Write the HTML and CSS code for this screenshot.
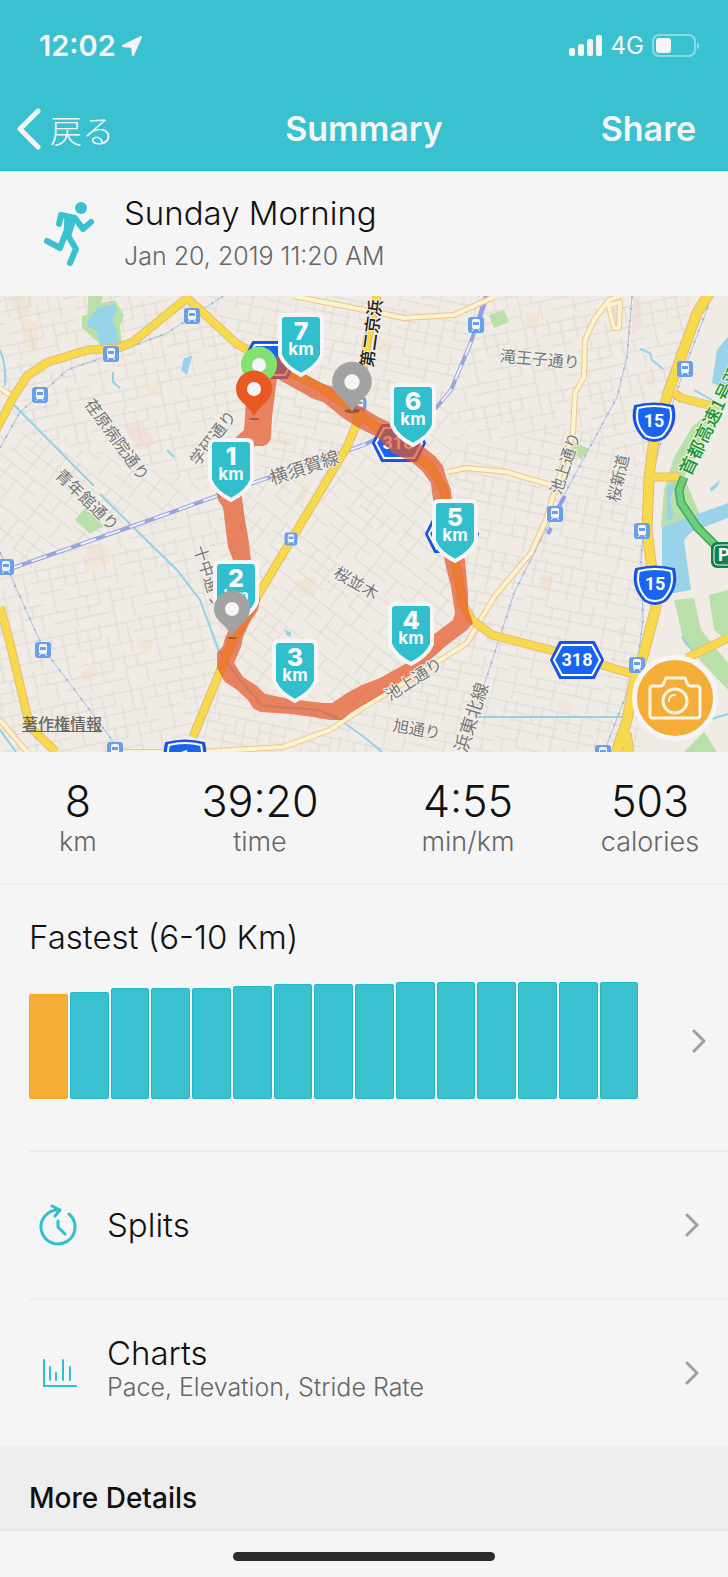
FILE: index.html
```html
<!DOCTYPE html>
<html lang="en">

<head>
   <meta charset="UTF-8">
   <meta name="viewport" content="width=device-width, initial-scale=1.0">
   <title>Summary</title>

   <link rel="stylesheet" href="styles.css">
</head>

<body>
   <header class="header">
      <div class="status">
         <div class="status__group">
            <span class="status__time">12:02</span>
            <svg class="status__arrow" viewBox="0 0 20 20">
               <path d="M19 1 L1 10 L10 11 L11 19 Z" fill="#f5f5f5" stroke="#f5f5f5" stroke-width="2" stroke-linejoin="round" />
            </svg>
         </div>
         <div class="status__group status__group--right">
            <svg class="status__signal" viewBox="0 0 34 22" fill="#f5f5f5">
               <rect x="0" y="13" width="6" height="8" rx="2" />
               <rect x="9" y="9" width="6" height="12" rx="2" />
               <rect x="18" y="4" width="6" height="17" rx="2" />
               <rect x="27" y="0" width="6" height="21" rx="2" />
            </svg>
            <span class="status__network">4G</span>
            <svg class="status__battery" viewBox="0 0 48 24">
               <rect x="1" y="1" width="42" height="21" rx="6" fill="none" stroke="#8cdbe3" stroke-width="2" />
               <rect x="4" y="4" width="15" height="15" rx="3" fill="#f5f5f5" />
               <path d="M45 8 Q50 11 45 16 Z" fill="#8cdbe3" />
            </svg>
         </div>
      </div>

      <nav class="nav">
         <button class="nav__button nav__back" type="button">
            <svg class="nav__icon" viewBox="0 0 25 42">
               <path d="M22 3 L4 21 L22 39" fill="none" stroke="#f5f5f5" stroke-width="5" stroke-linecap="round" stroke-linejoin="round" />
            </svg>
            <span lang="ja">戻る</span>
         </button>
         <h1 class="nav__title">Summary</h1>
         <button class="nav__button nav__share" type="button">Share</button>
      </nav>
   </header>

   <main>
      <section class="activity">
         <svg class="activity__icon" viewBox="0 0 52 66" fill="none" stroke="#3ac1cf" stroke-width="6" stroke-linecap="round" stroke-linejoin="round">
            <circle cx="37" cy="7" r="6" fill="#3ac1cf" stroke="none" />
            <path d="M15 23 L17 14 L31 17 L39 28 L47 21" />
            <path d="M3 40 L16 47 L27 18" />
            <path d="M23 33 L32 48 L26 62" />
            <path d="M22 15 L31 18 L26 34 L21 34 Z" fill="#3ac1cf" stroke-width="3" />
         </svg>
         <div>
            <h2 class="activity__name">Sunday Morning</h2>
            <p class="activity__date">Jan 20, 2019 11:20 AM</p>
         </div>
      </section>

      <section class="map">
         <svg class="map__canvas" viewBox="0 0 728 456" lang="ja">
            <defs>
               <pattern id="streets-a" width="92" height="68" patternUnits="userSpaceOnUse" patternTransform="rotate(-12)">
                  <path d="M0 5 H92 M0 16 H28 M8 25 H60 M5 0 V25 M16 5 V39 M28 0 V16 M34 16 V50 M46 0 V25 M56 5 V34 M70 0 V16 M82 5 V50 M60 16 H92 M70 28 H92 M0 39 H70 M0 50 H34 M46 50 H92 M8 50 V68 M22 39 V60 M46 34 V68 M58 39 V50 M66 50 V68 M0 60 H46 M76 60 H92" class="map__street" />
               </pattern>
               <pattern id="streets-b" width="100" height="80" patternUnits="userSpaceOnUse" patternTransform="rotate(38)">
                  <path d="M0 4 H100 M0 14 H30 M12 23 H60 M0 33 H36 M6 4 V33 M20 0 V23 M30 4 V44 M42 14 V33 M52 4 V44 M66 0 V30 M80 4 V44 M60 16 H100 M66 30 H92 M0 44 H100 M0 56 H52 M60 60 H100 M12 44 V80 M26 56 V80 M40 44 V68 M60 44 V80 M74 44 V60 M88 60 V80 M0 70 H26 M40 68 H80" class="map__street" />
               </pattern>
               <pattern id="streets-c" width="96" height="72" patternUnits="userSpaceOnUse" patternTransform="rotate(12)">
                  <path d="M0 3 H96 M0 12 H30 M10 20 H60 M0 29 H96 M4 3 V29 M14 0 V12 M22 12 V46 M32 3 V20 M41 0 V36 M56 3 V46 M68 0 V20 M82 3 V36 M56 12 H82 M68 20 H96 M0 40 H22 M22 46 H70 M0 56 H96 M8 40 V72 M30 46 V60 M48 46 V72 M70 36 V56 M84 44 V72 M70 44 H96 M8 64 H48" class="map__street" />
               </pattern>
               <g id="station">
                  <rect x="-8" y="-8" width="16" height="16" rx="3" fill="#689fe8" />
                  <path d="M-4 -4 Q-4 -6 -2 -6 H2 Q4 -6 4 -4 V2 Q4 4 2 4 H-2 Q-4 4 -4 2 Z" fill="#f5f5f5" />
                  <path d="M-3 -3 H3 V0 H-3 Z" fill="#689fe8" />
                  <path d="M-2 4 L-4 6 M2 4 L4 6" stroke="#f5f5f5" />
               </g>
               <g id="hexagon">
                  <path d="M-26 0 L-17 -18 H17 L26 0 L17 18 H-17 Z" fill="#1a64f0" stroke="#1a4fe0" stroke-width="2" stroke-linejoin="round" />
                  <path d="M-23 0 L-15 -15 H15 L23 0 L15 15 H-15 Z" fill="none" stroke="#fff" stroke-width="2" stroke-linejoin="round" />
               </g>
               <g id="shield">
                  <path d="M-19 -16 Q0 -21 19 -16 Q24 2 10 16 Q0 22 -10 16 Q-24 2 -19 -16 Z" fill="#1a64f0" stroke="#1a4fe0" stroke-width="2" />
                  <path d="M-16 -14 Q0 -18 16 -14 Q20 2 8 14 Q0 18 -8 14 Q-20 2 -16 -14 Z" fill="none" stroke="#fff" stroke-width="2" />
               </g>
               <path id="marker" d="M-16 2 H16 Q21 2 21 7 V42 Q16 54 0 62 Q-16 54 -21 42 V7 Q-21 2 -16 2 Z" fill="#31bfcd" stroke="#f5f5f5" stroke-width="4" />
               <path id="pin" d="M0 27 Q-4 20 -13 12 A18 18 0 1 1 13 12 Q4 20 0 27 Z M0 -7 A7 7 0 1 0 0 7 A7 7 0 1 0 0 -7 Z" />
            </defs>

            <!-- ground -->
            <rect width="728" height="456" fill="#f0ece5" />
            <g fill="#f0e5d6">
               <path d="M8 0 H33 L29 21 L13 16 Z M24 22 L40 28 L37 54 L22 49 Z M145 92 L160 83 L163 92 L149 100 Z" />
               <path d="M85 250 H108 L110 268 L88 275 Z M296 284 L317 281 L312 300 L299 302 Z M138 341 L154 346 L149 356 L136 350 Z" />
               <path d="M272 140 L295 143 L292 150 L272 148 Z M302 190 L313 184 L303 207 L296 203 Z M378 40 L393 46 L388 60 L378 55 Z" />
               <path d="M526 17 H540 L537 34 L526 31 Z M647 78 L657 82 L652 91 L644 88 Z M80 378 L95 367 L99 378 L84 386 Z" />
               <path d="M540 278 L552 280 L549 295 L540 291 Z M618 333 L626 330 L625 340 L617 341 Z M559 404 L573 408 L567 418 L558 413 Z" />
            </g>
            <path d="M125 132 L142 124 L156 147 L138 156 Z M633 0 H640 L643 30 L632 40 Z" fill="#f3e0dd" />

            <path d="M0 0 H190 L270 60 L210 190 L0 130 Z" fill="url(#streets-a)" />
            <path d="M0 130 L210 190 L160 222 L0 275 Z" fill="url(#streets-b)" />
            <path d="M190 0 H480 L450 100 L250 190 L270 60 Z" fill="url(#streets-c)" />
            <path d="M0 275 L160 222 L245 190 L240 320 L190 456 H0 Z" fill="url(#streets-a)" />
            <path d="M245 190 L450 100 L460 320 L330 430 L220 370 Z" fill="url(#streets-b)" />
            <path d="M480 0 H700 L650 180 L580 130 L470 150 L450 100 Z" fill="url(#streets-a)" />
            <path d="M450 110 L470 150 L580 130 L650 180 L640 456 H190 L220 370 L330 430 L465 330 Z" fill="url(#streets-c)" />

            <!-- parks -->
            <g fill="#badfaa">
               <path d="M88 0 H103 L101 7 L115 4 L124 19 L120 30 L122 48 L100 48 L82 32 V20 L88 18 Z" />
               <path d="M75 224 L85 212 L104 230 L90 238 Z M489 19 L504 14 L509 26 L494 32 Z M574 146 L589 153 L581 164 L572 155 Z" />
               <path d="M728 105 L711 114 L692 131 L674 161 L664 194 L661 231 L678 227 L700 219 L684 181 Z" />
               <path d="M674 304 L694 302 L701 334 L728 367 V394 L684 347 Z M709 299 L728 294 V345 L714 334 Z M684 456 L704 436 L717 456 Z" />
            </g>

            <!-- water -->
            <g fill="#98d3ea">
               <path d="M88 24 L97 12 L115 8 L117 14 L112 24 L117 36 L119 48 L100 49 L97 34 L87 30 Z M184 62 L192 60 L187 79 L181 74 Z" />
               <path d="M728 41 L717 54 L712 87 L728 94 Z M662 231 L728 207 V222 L691 236 L684 244 L691 294 L662 299 Z" />
               <path d="M667 190 L675 186 L670 206 L674 220 L667 226 Z M710 192 L720 184 L718 190 L711 196 Z M285 334 L291 336 V341 L286 339 Z" />
            </g>
            <g fill="none" stroke="#92d2e6" stroke-width="2">
               <path d="M12 107 L94 190 M100 198 L133 231 L177 274 L200 304 L219 355 L240 384 L263 410 L320 414 L340 424 L364 441 L382 456" />
               <path d="M0 54 Q6 66 5 90 M113 76 V86 L120 92 M167 154 L174 161 M640 53 L650 57 L652 64 L663 73 M694 94 L712 104" />
               <path d="M477 421 H631 M708 424 L728 418" />
               <path d="M0 434 L16 456 M682 341 L692 354" />
            </g>

            <!-- railways -->
            <g fill="none" stroke="#adc2de" stroke-width="1">
               <path d="M0 152 L20 116 L40 99 L67 74 L110 59 L167 37 L192 21 L223 0 M0 256 L43 352 L107 437 L120 456" />
               <path d="M632 0 L627 61 L617 101 L556 214 L514 297 L477 411" />
               <path d="M712 0 L684 74 L666 127 L646 201 L641 264 L643 324 L637 371 L604 456" />
            </g>
            <g fill="none" stroke="#9db7de" stroke-width="2" stroke-dasharray="2 10">
               <path d="M0 152 L20 116 L40 99 L67 74 L110 59 L167 37 L192 21 L223 0 M0 256 L43 352 L107 437 L120 456" />
               <path d="M632 0 L627 61 L617 101 L556 214 L514 297 L477 411" />
               <path d="M712 0 L684 74 L666 127 L646 201 L641 264 L643 324 L637 371 L604 456" />
            </g>
            <path d="M7 274 L150 224 L253 187 L364 149 L436 112 L451 94 L471 46 L486 0" class="map__rail" />
            <path d="M7 274 L150 224 L253 187 L364 149 L436 112 L451 94 L471 46" class="map__rail map__rail--dash" />
            <path d="M485 6 L479 24 M565 200 L558 212 M551 232 L548 238 M641 355 L638 374" fill="none" stroke="#949bf4" stroke-width="4" />

            <!-- minor roads -->
            <g class="map__road map__road--minor-edge">
               <path d="M381 17 L404 22 L454 19 L494 1 M293 0 L370 15 M0 92 L10 99 M447 176 L467 172 L507 176 L551 189" />
               <path d="M620 0 L609 4 L594 24 L585 44 L584 81 L575 97 L573 137 L551 207 L546 224 L531 257 L494 301 L467 347 L414 381 L364 411 L330 434 L283 451 L200 456 H120" />
               <path d="M609 11 L614 32 H619 L620 6 L607 10 M0 424 L27 456" />
            </g>
            <g class="map__road map__road--minor">
               <path d="M381 17 L404 22 L454 19 L494 1 M293 0 L370 15 M0 92 L10 99 M447 176 L467 172 L507 176 L551 189" />
               <path d="M620 0 L609 4 L594 24 L585 44 L584 81 L575 97 L573 137 L551 207 L546 224 L531 257 L494 301 L467 347 L414 381 L364 411 L330 434 L283 451 L200 456 H120" />
               <path d="M609 11 L614 32 H619 L620 6 L607 10 M0 424 L27 456" />
            </g>

            <!-- major roads -->
            <g class="map__road map__road--edge">
               <path d="M-4 134 L14 100 L28 79 L48 66 L88 54 L118 52 L133 46 L187 2 L237 48 L275 68 L320 91 L355 115 L400 149 L431 171 L444 194 L456 270 L463 308 L472 324 L492 339 L551 354 L636 379" />
               <path d="M377 0 L366 51 L357 127 L347 151 L257 301 L230 351 L193 441 M0 311 L10 347 L30 431 L56 456" />
               <path d="M674 97 L681 102 L716 111 M651 181 H681 M687 362 L728 342" />
               <path d="M710 -4 L697 17 L669 94 L654 144 L649 181 L647 234 L651 267 L656 311 L644 357 L634 387 L627 424 L615 460 M626 437 L629 456" class="map__wide-edge" />
            </g>
            <g class="map__road map__road--major">
               <path d="M-4 134 L14 100 L28 79 L48 66 L88 54 L118 52 L133 46 L187 2 L237 48 L275 68 L320 91 L355 115 L400 149 L431 171 L444 194 L456 270 L463 308 L472 324 L492 339 L551 354 L636 379" />
               <path d="M377 0 L366 51 L357 127 L347 151 L257 301 L230 351 L193 441 M0 311 L10 347 L30 431 L56 456" />
               <path d="M674 97 L681 102 L716 111 M651 181 H681 M687 362 L728 342" />
               <path d="M710 -4 L697 17 L669 94 L654 144 L649 181 L647 234 L651 267 L656 311 L644 357 L634 387 L627 424 L615 460 M626 437 L629 456" class="map__wide" />
            </g>
            <path d="M684 181 L679 194 L681 207 L697 231 L716 250" fill="none" stroke="#4da35a" stroke-width="9" />
            <path d="M684 181 L679 194 L681 207 L697 231 L716 250" fill="none" stroke="#6bce7a" stroke-width="6" />

            <!-- stations -->
            <use href="#station" x="192" y="20" />
            <use href="#station" x="111" y="58" />
            <use href="#station" x="40" y="99" />
            <use href="#station" x="476" y="29" />
            <use href="#station" x="685" y="73" />
            <use href="#station" x="555" y="218" />
            <use href="#station" x="642" y="235" />
            <use href="#station" x="6" y="271" />
            <use href="#station" x="43" y="354" />
            <use href="#station" x="115" y="454" />
            <use href="#station" transform="translate(291 243) scale(0.8)" />
            <use href="#station" x="637" y="369" />
            <use href="#station" x="603" y="457" />
            <use href="#station" transform="translate(360 108) scale(0.8)" />

            <!-- road numbers -->
            <g class="map__number">
               <use href="#hexagon" x="270" y="64" />
               <use href="#hexagon" x="399" y="147" />
               <text x="398" y="153">318</text>
               <use href="#hexagon" x="452" y="238" />
               <use href="#hexagon" x="577" y="364" />
               <text x="577" y="370">318</text>
               <use href="#shield" x="654" y="126" />
               <text x="654" y="131">15</text>
               <use href="#shield" x="655" y="289" />
               <text x="655" y="294">15</text>
               <use href="#shield" x="185" y="463" />
               <text x="185" y="467">1</text>
               <rect x="712" y="247" width="40" height="24" rx="5" fill="#12804a" stroke="#12804a" stroke-width="2" />
               <rect x="714" y="249" width="40" height="20" rx="4" fill="none" stroke="#fff" stroke-width="1" />
               <text x="729" y="265">PA</text>
            </g>

            <!-- route, outer edge then inner edge -->
            <path class="map__route" d="M247 75 L245 121 L244 134 L235 142 L216 194 L218 204 L223 211 L228 251 L233 264 L240 310 L225 342 L223 350 L217 357 L217 372 L225 386 L236 393 L248 404 L253 412 L260 416 L290 418 L313 421 L330 424 L342 424 L350 417 L367 407 L382 398 L400 386 L416 375 L430 364 L447 349 L467 334 L473 327 L468 312 L468 297 L465 264 L452 207 L451 194 L446 181 L443 170 L436 161 L415 144 L400 137 L393 128 L380 122 L360 110 L333 91 L321 87 L310 81 L277 61 L260 60 Z
               M277 82 L283 86 L303 97 L311 102 L323 106 L332 113 L343 122 L357 131 L377 141 L393 157 L413 167 L422 175 L431 187 L432 197 L446 271 L451 291 L455 317 L453 324 L433 339 L420 352 L407 367 L380 382 L362 389 L347 397 L332 407 L323 407 L290 403 L265 398 L257 390 L243 381 L234 367 L241 351 L243 341 L250 326 L258 314 L260 304 L251 264 L248 240 L245 224 L241 194 L250 155 L255 150 L263 150 Q270 148 271 141 L272 121 Z" />

            <!-- street names -->
            <g class="map__label">
               <text transform="translate(118 143) rotate(54)">荏原病院通り</text>
               <text transform="translate(88 203) rotate(44)">青年館通り</text>
               <text transform="translate(212 141) rotate(-52)">学研通り</text>
               <text transform="translate(304 170) rotate(-18)" class="map__label--large">横須賀線</text>
               <text transform="translate(540 62) rotate(5)">滝王子通り</text>
               <text transform="translate(564 167) rotate(-72)">池上通り</text>
               <text transform="translate(617 182) rotate(-77)">桜新道</text>
               <text transform="translate(210 280) rotate(72)">十中通り</text>
               <text transform="translate(357 286) rotate(30)">桜並木</text>
               <text transform="translate(413 382) rotate(-33)">池上通り</text>
               <text transform="translate(417 432) rotate(10)">旭通り</text>
               <text transform="translate(470 421) rotate(-72)" class="map__label--large">浜東北線</text>
               <text transform="translate(370 37) rotate(-82)" class="map__label--dark">第二京浜</text>
               <text transform="translate(709 124) rotate(-64)" class="map__label--green">首都高速1号羽</text>
            </g>

            <!-- kilometre markers and pins -->
            <g class="map__marker">
               <g transform="translate(301 17)">
                  <use href="#marker" />
                  <text y="27" class="map__km">7</text>
                  <text y="42">km</text>
               </g>
               <g transform="translate(231 142)">
                  <use href="#marker" />
                  <text y="27" class="map__km">1</text>
                  <text y="42">km</text>
               </g>
               <g transform="translate(413 87)">
                  <use href="#marker" />
                  <text y="27" class="map__km">6</text>
                  <text y="42">km</text>
               </g>
               <g transform="translate(455 203)">
                  <use href="#marker" />
                  <text y="27" class="map__km">5</text>
                  <text y="42">km</text>
               </g>
               <g transform="translate(411 306)">
                  <use href="#marker" />
                  <text y="27" class="map__km">4</text>
                  <text y="42">km</text>
               </g>
               <g transform="translate(295 343)">
                  <use href="#marker" />
                  <text y="27" class="map__km">3</text>
                  <text y="42">km</text>
               </g>
               <g transform="translate(236 264)">
                  <use href="#marker" />
                  <text y="27" class="map__km">2</text>
                  <text y="42">km</text>
               </g>
            </g>
            <g fill="#000" fill-opacity="0.3">
               <ellipse cx="254" cy="123" rx="5" ry="1" />
               <ellipse cx="352" cy="115" rx="8" ry="2" />
               <ellipse cx="232" cy="342" rx="5" ry="1" />
            </g>
            <g fill="#f5f5f5">
               <circle cx="259" cy="69" r="8" />
               <use href="#pin" x="259" y="69" fill="#84e170" fill-rule="evenodd" />
               <circle cx="254" cy="93" r="8" />
               <use href="#pin" x="254" y="93" fill="#e75a25" fill-rule="evenodd" />
               <circle cx="352" cy="86" r="9" />
               <use href="#pin" transform="translate(352 86) scale(1.1)" fill="#a2a2a2" fill-rule="evenodd" />
               <circle cx="232" cy="313" r="8" />
               <use href="#pin" x="232" y="313" fill="#a2a2a2" fill-rule="evenodd" />
            </g>
         </svg>

         <a class="map__legal" href="#" lang="ja">著作権情報</a>
         <button class="map__camera" type="button" aria-label="Add photo">
            <svg viewBox="0 0 52 44" fill="none" stroke="#f8f3e8" stroke-width="3" stroke-linejoin="round">
               <path d="M4 10 H11 Q14 10 15 7 L17 2 H36 L38 7 Q39 10 42 10 H48 Q51 10 51 13 V39 Q51 42 48 42 H4 Q1 42 1 39 V13 Q1 10 4 10 Z" />
               <circle cx="26" cy="25" r="12" />
               <path d="M20 25 Q20 19 26 19" stroke-width="2" stroke-linecap="round" />
            </svg>
         </button>
      </section>

      <section class="stats">
         <div class="stat">
            <div class="stat__value">8</div>
            <div class="stat__label">km</div>
         </div>
         <div class="stat">
            <div class="stat__value">39:20</div>
            <div class="stat__label">time</div>
         </div>
         <div class="stat">
            <div class="stat__value">4:55</div>
            <div class="stat__label">min/km</div>
         </div>
         <div class="stat">
            <div class="stat__value">503</div>
            <div class="stat__label">calories</div>
         </div>
      </section>

      <section class="fastest">
         <h2 class="fastest__title">Fastest (6-10 Km)</h2>
         <div class="fastest__row">
            <div class="bars">
               <div class="bar bar--current" style="height: 105px;"></div>
               <div class="bar" style="height: 107px;"></div>
               <div class="bar" style="height: 111px;"></div>
               <div class="bar" style="height: 111px;"></div>
               <div class="bar" style="height: 111px;"></div>
               <div class="bar" style="height: 113px;"></div>
               <div class="bar" style="height: 115px;"></div>
               <div class="bar" style="height: 115px;"></div>
               <div class="bar" style="height: 115px;"></div>
               <div class="bar" style="height: 117px;"></div>
               <div class="bar" style="height: 117px;"></div>
               <div class="bar" style="height: 117px;"></div>
               <div class="bar" style="height: 117px;"></div>
               <div class="bar" style="height: 117px;"></div>
               <div class="bar" style="height: 117px;"></div>
            </div>
            <svg class="chevron" viewBox="0 0 14 24">
               <path d="M2 2 L12 12 L2 22" />
            </svg>
         </div>
      </section>

      <button class="row" type="button">
         <svg class="row__icon" viewBox="0 0 40 42" fill="none" stroke="#2fc0ce" stroke-width="3" stroke-linecap="round" stroke-linejoin="round">
            <path d="M31 10 A17 17 0 1 1 21 6" />
            <path d="M14 2 L22 6 L17 12 M20 17 V23 L27 30" />
         </svg>
         <span class="row__text">
            <span class="row__title">Splits</span>
         </span>
         <svg class="chevron" viewBox="0 0 14 24">
            <path d="M2 2 L12 12 L2 22" />
         </svg>
      </button>

      <button class="row" type="button">
         <svg class="row__icon" viewBox="0 0 40 42" fill="none" stroke="#2fc0ce" stroke-width="2" stroke-linecap="round">
            <path d="M6 8 V34 H38" />
            <path d="M12 15 V28 M18 21 V28 M25 8 V28 M32 15 V28" />
         </svg>
         <span class="row__text row__text--double">
            <span class="row__title">Charts</span>
            <span class="row__subtitle">Pace, Elevation, Stride Rate</span>
         </span>
         <svg class="chevron" viewBox="0 0 14 24">
            <path d="M2 2 L12 12 L2 22" />
         </svg>
      </button>

      <h2 class="more">More Details</h2>
   </main>

   <footer class="home">
      <div class="home__bar"></div>
   </footer>
</body>

</html>
```
FILE: styles.css
```css
* {
   box-sizing: border-box;
   padding: 0;
   margin: 0;
}

body {
   background-color: #f5f5f5;
   color: #111;
   font-family: Inter, 'Noto Sans CJK JP', sans-serif;
   font-weight: 300;
}

button {
   background: none;
   border: none;
   color: inherit;
   font: inherit;
}

svg {
   display: block;
   flex-shrink: 0;
}

.header {
   background-color: #3ac1cf;
   border-bottom: 1px solid #16b7c8;
   color: #f5f5f5;
}

.status {
   display: flex;
   justify-content: space-between;
   align-items: center;
   height: 91px;
   padding: 0 28px 0 39px;
}

.status__group {
   display: flex;
   align-items: center;
   gap: 6px;
}

.status__group--right {
   gap: 8px;
}

.status__time {
   font-size: 29px;
   font-weight: 600;
}

.status__arrow {
   width: 20px;
   height: 20px;
}

.status__signal {
   width: 34px;
   height: 22px;
}

.status__network {
   font-size: 24px;
   font-weight: 400;
}

.status__battery {
   width: 48px;
   height: 24px;
}

.nav {
   display: grid;
   grid-template-columns: 1fr auto 1fr;
   align-items: center;
   height: 79px;
   padding: 0 16px 4px;
}

.nav__back {
   display: flex;
   align-items: center;
   justify-self: start;
   gap: 9px;
   font-family: 'Noto Sans CJK JP', sans-serif;
   font-size: 32px;
   line-height: 40px;
}

.nav__icon {
   width: 25px;
   height: 42px;
}

.nav__title,
.nav__share {
   font-size: 34px;
   font-weight: 600;
}

.nav__share {
   justify-self: end;
   padding-right: 16px;
}

.activity {
   display: flex;
   align-items: center;
   gap: 28px;
   height: 125px;
   padding: 0 44px;
}

.activity__icon {
   width: 52px;
   height: 66px;
}

.activity__name {
   font-size: 33px;
   font-weight: 300;
   line-height: 44px;
}

.activity__date {
   color: #666;
   font-size: 25px;
   line-height: 42px;
}

.map {
   position: relative;
   overflow: hidden;
}

.map__canvas {
   width: 100%;
   height: auto;
}

.map__street {
   fill: none;
   stroke: #dad8d2;
   stroke-width: 1;
}

.map__rail {
   fill: none;
   stroke: #98a5dc;
   stroke-width: 4;
}

.map__rail--dash {
   stroke: #eef0fa;
   stroke-width: 2;
   stroke-dasharray: 16 10;
}

.map__road {
   fill: none;
   stroke-linejoin: round;
}

.map__road--minor-edge {
   stroke: #f0c48e;
   stroke-width: 6;
}

.map__road--minor {
   stroke: #faf3cf;
   stroke-width: 4;
}

.map__road--edge {
   stroke: #e5b978;
   stroke-width: 9;
}

.map__road--major {
   stroke: #f6da4c;
   stroke-width: 7;
}

.map__wide-edge {
   stroke-width: 11;
}

.map__wide {
   stroke-width: 9;
}

.map__route {
   fill: #e55527;
   fill-rule: evenodd;
   opacity: 0.7;
}

.map__number text {
   fill: #fff;
   font-family: Roboto, sans-serif;
   font-size: 18px;
   font-weight: 700;
   text-anchor: middle;
}

.map__label text {
   fill: #777;
   stroke: #f3f0ea;
   stroke-width: 2;
   paint-order: stroke;
   font-family: 'Noto Sans CJK JP', sans-serif;
   font-size: 16px;
   font-weight: 400;
   text-anchor: middle;
   dominant-baseline: central;
}

.map__label .map__label--large {
   font-size: 18px;
}

.map__label .map__label--dark {
   fill: #222;
   font-size: 17px;
   font-weight: 500;
}

.map__label .map__label--green {
   fill: #159a2c;
   font-size: 18px;
   font-weight: 500;
}

.map__marker text {
   fill: #f8f8f8;
   font-size: 17px;
   font-weight: 700;
   text-anchor: middle;
}

.map__marker .map__km {
   font-size: 25px;
   font-weight: 800;
}

.map__legal {
   position: absolute;
   left: 22px;
   bottom: 16px;
   color: #666;
   font-size: 16px;
   font-weight: 500;
   line-height: 24px;
}

.map__camera {
   position: absolute;
   right: 10px;
   bottom: 11px;
   display: flex;
   align-items: center;
   justify-content: center;
   width: 86px;
   height: 86px;
   background-color: #f4ae38;
   border: 5px solid #f5f5f5;
   border-radius: 50%;
}

.map__camera svg {
   width: 52px;
   height: 44px;
   overflow: visible;
}

.stats {
   display: grid;
   grid-template-columns: 3fr 4fr 4fr 3fr;
   padding: 24px 0 26px;
   border-bottom: 2px solid #ececec;
   text-align: center;
}

.stat__value {
   font-size: 43px;
   line-height: 50px;
}

.stat__label {
   color: #666;
   font-size: 27px;
   line-height: 31px;
}

.fastest {
   padding: 32px 22px 0 29px;
}

.fastest__title {
   font-size: 33px;
   font-weight: 300;
   line-height: 40px;
}

.fastest__row {
   display: flex;
   align-items: center;
   justify-content: space-between;
   padding: 25px 0 51px;
}

.bars {
   display: grid;
   grid-template-columns: repeat(15, 1fr);
   align-items: end;
   gap: 2px;
   width: 90%;
}

.bar {
   background-color: #3ac1cf;
   border: 1px solid #20b9c9;
   border-radius: 2px;
}

.bar--current {
   background-color: #f4ae38;
   border-color: #f5a623;
}

.chevron {
   width: 14px;
   height: 24px;
   fill: none;
   stroke: #a0a0a0;
   stroke-width: 3;
   stroke-linecap: round;
   stroke-linejoin: round;
}

.row {
   display: flex;
   align-items: center;
   gap: 29px;
   width: calc(100% - 29px);
   height: 148px;
   margin-left: 29px;
   padding: 0 29px 0 9px;
   border-top: 2px solid #ececec;
   text-align: left;
}

.row__icon {
   width: 40px;
   height: 42px;
}

.row__text {
   display: flex;
   flex-direction: column;
   flex-grow: 1;
}

.row__text--double {
   padding-bottom: 10px;
}

.row__title {
   font-size: 33px;
   line-height: 38px;
}

.row__subtitle {
   color: #666;
   font-size: 25px;
   line-height: 30px;
}

.more {
   padding: 34px 29px 13px;
   background-color: #eee;
   border-bottom: 2px solid #e6e6e6;
   font-size: 28px;
   font-weight: 500;
   line-height: 36px;
}

.home {
   padding: 21px 0 16px;
}

.home__bar {
   width: 36%;
   height: 9px;
   margin: 0 auto;
   background-color: #2b2b2b;
   border-radius: 5px;
}
```
